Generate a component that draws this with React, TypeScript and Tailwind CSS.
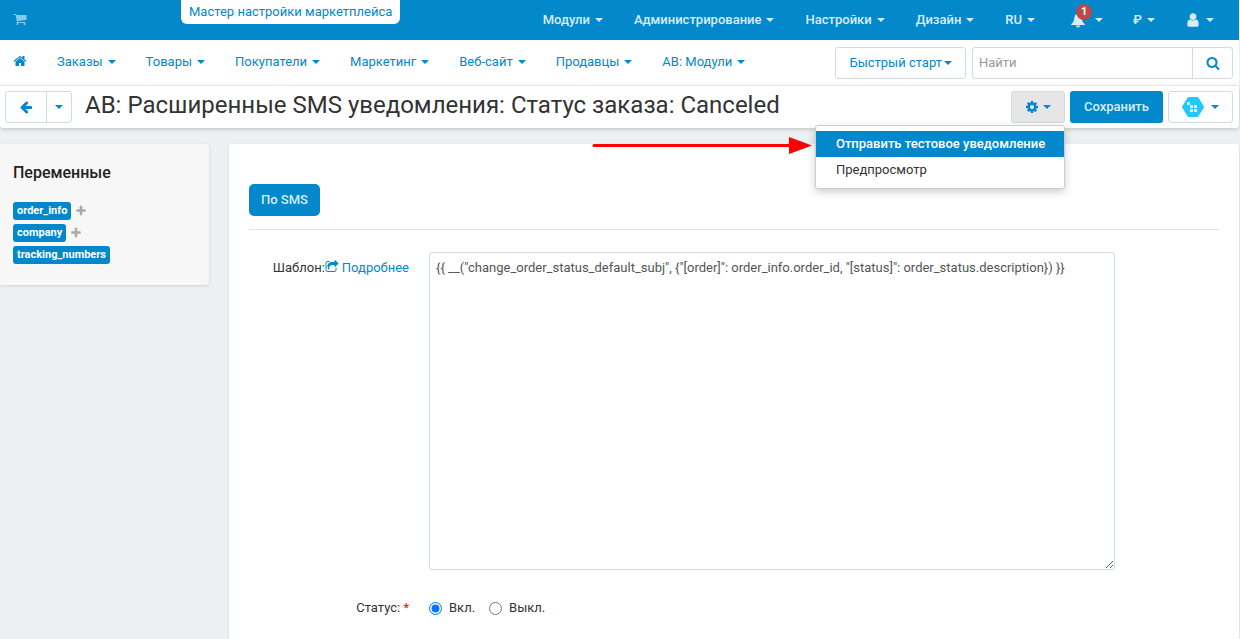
import { useState, type ReactNode } from "react"
import clsx from "clsx"

const icons = {
  cart: "M704 1536q0 52-38 90t-90 38-90-38-38-90 38-90 90-38 90 38 38 90zm896 0q0 52-38 90t-90 38-90-38-38-90 38-90 90-38 90 38 38 90zm128-1088v512q0 24-16.5 42.5t-40.5 21.5l-1044 122q13 60 13 70 0 16-24 64h920q26 0 45 19t19 45-19 45-45 19h-1024q-26 0-45-19t-19-45q0-11 8-31.5t16-36 21.5-40 15.5-29.5l-177-823h-204q-26 0-45-19t-19-45 19-45 45-19h256q16 0 28.5 6.5t19.5 15.5 13 24.5 8 26 5.5 29.5 4.5 26h1201q26 0 45 19t19 45z",
  home: "M1472 992v480q0 26-19 45t-45 19h-384v-384h-256v384h-384q-26 0-45-19t-19-45v-480q0-1 .5-3t.5-3l575-474 575 474q1 2 1 6zm223-69l-62 74q-8 9-21 11h-3q-13 0-21-7l-692-577-692 577q-12 8-24 7-13-2-21-11l-62-74q-8-10-7-23.5t11-21.5l719-599q32-26 76-26t76 26l244 204v-195q0-14 9-23t23-9h192q14 0 23 9t9 23v408l219 182q10 8 11 21.5t-7 23.5z",
  arrowLeft: "M1664 896v128q0 53-32.5 90.5t-84.5 37.5h-704l293 294q38 36 38 90t-38 90l-75 76q-37 37-90 37-52 0-91-37l-651-652q-37-37-37-90 0-52 37-91l651-650q38-38 91-38 52 0 90 38l75 74q38 38 38 91t-38 91l-293 293h704q52 0 84.5 37.5t32.5 90.5z",
  search: "M1216 832q0-185-131.5-316.5t-316.5-131.5-316.5 131.5-131.5 316.5 131.5 316.5 316.5 131.5 316.5-131.5 131.5-316.5zm512 832q0 52-38 90t-90 38q-54 0-90-38l-343-342q-179 124-399 124-143 0-273.5-55.5t-225-150-150-225-55.5-273.5 55.5-273.5 150-225 225-150 273.5-55.5 273.5 55.5 225 150 150 225 55.5 273.5q0 220-124 399l343 343q37 37 37 90z",
  cog: "M1152 896q0-106-75-181t-181-75-181 75-75 181 75 181 181 75 181-75 75-181zm512-109v222q0 12-8 23t-20 13l-185 28q-19 54-39 91 35 50 107 138 10 12 10 25t-9 23q-27 37-99 108t-94 71q-12 0-26-9l-138-108q-44 23-91 38-16 136-29 186-7 28-36 28h-222q-14 0-24.5-8.5t-11.5-21.5l-28-184q-49-16-90-37l-141 107q-10 9-25 9-14 0-25-11-126-114-165-168-7-10-7-23 0-12 8-23 15-21 51-66.5t54-70.5q-27-50-41-99l-183-27q-13-2-21-12.5t-8-23.5v-222q0-12 8-23t19-13l186-28q14-46 39-92-40-57-107-138-10-12-10-24 0-10 9-23 26-36 98.5-107.5t94.5-71.5q13 0 26 10l138 107q44-23 91-38 16-136 29-186 7-28 36-28h222q14 0 24.5 8.5t11.5 21.5l28 184q49 16 90 37l142-107q9-9 24-9 13 0 25 10 129 119 165 170 7 8 7 22 0 12-8 23-15 21-51 66.5t-54 70.5q26 50 41 98l183 28q13 2 21 12.5t8 23.5z",
  plus: "M1600 736v192q0 40-28 68t-68 28h-416v416q0 40-28 68t-68 28h-192q-40 0-68-28t-28-68v-416h-416q-40 0-68-28t-28-68v-192q0-40 28-68t68-28h416v-416q0-40 28-68t68-28h192q40 0 68 28t28 68v416h416q40 0 68 28t28 68z",
  share: "M1472 989v259q0 119-84.5 203.5t-203.5 84.5h-832q-119 0-203.5-84.5t-84.5-203.5v-832q0-119 84.5-203.5t203.5-84.5h255q13 0 22.5 9.5t9.5 22.5q0 27-26 32-77 26-133 60-10 4-16 4h-112q-66 0-113 47t-47 113v832q0 66 47 113t113 47h832q66 0 113-47t47-113v-214q0-19 18-29 28-13 54-37 16-16 35-8 21 9 21 29zm237-496l-384 384q-18 19-45 19-12 0-25-5-39-17-39-59v-192h-160q-323 0-438 131-119 137-74 473 3 23-20 34-8 2-12 2-16 0-26-13-10-14-21-31t-39.5-68.5-49.5-99.5-38.5-114-17.5-122q0-49 3.5-91t14-90 28-88 47-81.5 68.5-74 94.5-61.5 124.5-48.5 159.5-30.5 196.5-11h160v-192q0-42 39-59 13-5 25-5 26 0 45 19l384 384q19 19 19 45t-19 45z",
  user: "M1536 1399q0 109-62.5 187t-150.5 78h-854q-88 0-150.5-78t-62.5-187q0-85 8.5-160.5t31.5-152 58.5-131 94-89 134.5-34.5q131 128 313 128t313-128q76 0 134.5 34.5t94 89 58.5 131 31.5 152 8.5 160.5zm-256-887q0 159-112.5 271.5t-271.5 112.5-271.5-112.5-112.5-271.5 112.5-271.5 271.5-112.5 271.5 112.5 112.5 271.5z",
}

function Icon({ name, className = "size-3.5" }: { name: keyof typeof icons; className?: string }) {
  return (
    <svg viewBox="0 0 1792 1792" fill="currentColor" className={clsx("shrink-0", className)} aria-hidden="true">
      <path d={icons[name]} />
    </svg>
  )
}

function Caret() {
  return <span className="border-x-4 border-t-4 border-x-transparent" />
}

function MenuButton({ children, label }: { children: ReactNode; label?: string }) {
  return (
    <button type="button" aria-label={label} className="flex items-center gap-[5px] whitespace-nowrap">
      {children}
      <Caret />
    </button>
  )
}

const adminMenu = ["Модули", "Администрирование", "Настройки", "Дизайн", "RU"]

const storeMenu = ["Заказы", "Товары", "Покупатели", "Маркетинг", "Веб-сайт", "Продавцы", "АВ: Модули"]

const variables = [
  { name: "order_info", expandable: true },
  { name: "company", expandable: true },
  { name: "tracking_numbers", expandable: false },
]

function TopBar() {
  return (
    <header className="flex h-10 items-start bg-[#0388cc] pr-[25px] pl-[13px] font-medium text-[#d9edf7]">
      <a href="#store" aria-label="Магазин" className="flex h-[38px] items-center text-[#8cc9e9]">
        <Icon name="cart" />
      </a>
      <a
        href="#wizard"
        className="ml-[154px] flex h-6 items-center rounded-b-md bg-white px-2 font-normal whitespace-nowrap text-[#0388cc]"
      >
        Мастер настройки маркетплейса
      </a>
      <div className="ml-auto flex h-10 items-center gap-[35px]">
        <nav className="flex items-center gap-[31px]">
          {adminMenu.map((item) => (
            <MenuButton key={item}>{item}</MenuButton>
          ))}
        </nav>
        <div className="flex items-center gap-[30px]">
          <MenuButton label="Уведомления">
            <span className="relative mr-1 flex">
              <svg viewBox="0 0 16 16" fill="currentColor" className="size-4" aria-hidden="true">
                <path d="M8 1.500c-2 .3-3.400 1.800-3.600 4C4.100 9 3.200 10.600 1.200 12v1h13.600v-1c-2-1.400-2.900-3-3.200-6.500-.2-2.200-1.600-3.700-3.600-4zM6 13.500a2 2 0 0 0 4 0z" />
              </svg>
              <span className="absolute -top-2 left-1.5 flex size-4 items-center justify-center rounded-full bg-[#b94a48] text-[11px] leading-4 font-bold text-white">
                1
              </span>
            </span>
          </MenuButton>
          <MenuButton>₽</MenuButton>
          <MenuButton label="Профиль">
            <Icon name="user" className="size-4" />
          </MenuButton>
        </div>
      </div>
    </header>
  )
}

function StoreNav() {
  return (
    <div className="flex h-[46px] items-center border-b border-[#f2f2f2] bg-white pr-1.5 pl-[13px] text-[#0388cc]">
      <a href="#home" aria-label="Главная" className="pb-[3px]">
        <Icon name="home" />
      </a>
      <nav className="ml-[30px] flex items-center gap-[30px] pb-0.5">
        {storeMenu.map((item) => (
          <MenuButton key={item}>{item}</MenuButton>
        ))}
      </nav>
      <button
        type="button"
        className="ml-auto flex h-8 items-center gap-0.5 rounded-[3px] border border-[#d1dbe3] px-[13px] whitespace-nowrap"
      >
        Быстрый старт
        <Caret />
      </button>
      <form className="ml-1.5 flex h-8 rounded-[3px] border border-[#d1dbe3]" onSubmit={(e) => e.preventDefault()}>
        <input
          type="search"
          aria-label="Найти"
          placeholder="Найти"
          className="w-[219px] px-1.5 text-[#555] outline-none placeholder:text-[#999]"
        />
        <button
          type="submit"
          aria-label="Искать"
          className="flex w-10 items-center justify-center border-l border-[#d1dbe3]"
        >
          <Icon name="search" />
        </button>
      </form>
    </div>
  )
}

function ActionsMenu() {
  const [open, setOpen] = useState(true)

  return (
    <div className="relative">
      <button
        type="button"
        aria-label="Действия"
        aria-expanded={open}
        onClick={() => setOpen(!open)}
        className="flex h-8 w-[54px] items-center justify-center gap-1 rounded-[3px] border border-[#d1dbe3] bg-[#e6e6e6] text-[#0388cc]"
      >
        <Icon name="cog" />
        <Caret />
      </button>
      {open && (
        <div className="absolute top-full right-0 z-10 mt-0.5 w-[250px] rounded-[3px] border border-[#ccc] bg-white py-[5px] shadow-[0_3px_8px_rgba(0,0,0,0.2)]">
          <a href="#test" className="block bg-[#0388cc] px-5 py-[3px] font-medium whitespace-nowrap text-white">
            Отправить тестовое уведомление
          </a>
          <a href="#preview" className="block px-5 py-[3px] text-[#333]">
            Предпросмотр
          </a>
          <svg viewBox="0 0 220 18" className="absolute top-2.5 right-full mr-1 h-[18px] w-[220px]" aria-hidden="true">
            <path d="M2 9.500h198" stroke="#f00" strokeWidth="3" strokeLinecap="round" />
            <path d="M197 1L220 9.500l-23 8.500z" fill="#f00" />
          </svg>
        </div>
      )}
    </div>
  )
}

function TitleBar() {
  return (
    <div className="relative flex h-[42px] items-center rounded-b-[3px] bg-white pr-1.5 pl-[5px] shadow-[0_1px_4px_rgba(0,0,0,0.2)]">
      <div className="flex h-8 rounded-[3px] border border-[#d1dbe3] text-[#0388cc]">
        <button type="button" aria-label="Назад" className="flex w-10 items-center justify-center">
          <Icon name="arrowLeft" />
        </button>
        <button
          type="button"
          aria-label="История"
          className="flex w-[25px] items-center justify-center border-l border-[#d1dbe3]"
        >
          <Caret />
        </button>
      </div>
      <h1 className="ml-[13px] pb-1 text-2xl whitespace-nowrap text-[#333]">
        АВ: Расширенные SMS уведомления: Статус заказа: Canceled
      </h1>
      <div className="ml-auto flex gap-[5px]">
        <ActionsMenu />
        <button type="button" className="h-8 rounded-[3px] bg-[#0388cc] px-3.5 font-medium text-[#d9edf7]">
          Сохранить
        </button>
        <button
          type="button"
          aria-label="Модуль"
          className="flex h-8 w-[65px] items-center justify-center gap-[7px] rounded-[3px] border border-[#d1dbe3] text-[#0388cc]"
        >
          <svg viewBox="0 0 22 20" className="h-5 w-[22px]" aria-hidden="true">
            <path
              d="M6.500 1h9L21 10l-5.500 9h-9L1 10z"
              fill="#23c8fb"
              stroke="#23c8fb"
              strokeWidth="2"
              strokeLinejoin="round"
            />
            <g fill="#fff">
              <circle cx="6.500" cy="6.500" r="1.500" />
              <rect x="8" y="8" width="3" height="3" rx="1" />
              <rect x="12" y="8" width="3" height="3" rx="1" />
              <rect x="8" y="12" width="3" height="3" rx="1" />
              <rect x="12" y="12" width="3" height="3" rx="1" />
            </g>
          </svg>
          <Caret />
        </button>
      </div>
    </div>
  )
}

function Sidebar() {
  return (
    <aside className="w-[209px] shrink-0 self-start rounded-r-[3px] bg-[#f7f7f7] px-[13px] pt-[19px] pb-[21px] shadow-[0_1px_3px_rgba(0,0,0,0.12)]">
      <h2 className="text-base leading-5 font-medium text-[#222]">Переменные</h2>
      <ul className="mt-[19px] flex flex-col gap-1">
        {variables.map((v) => (
          <li key={v.name} className="flex items-center gap-1">
            <button
              type="button"
              className="h-[18px] rounded-[3px] bg-[#0388cc] px-1 text-[11px] leading-4 font-bold text-white"
            >
              {v.name}
            </button>
            {v.expandable && (
              <button type="button" aria-label={`Развернуть ${v.name}`} className="text-[#aaa]">
                <Icon name="plus" className="size-3" />
              </button>
            )}
          </li>
        ))}
      </ul>
    </aside>
  )
}

function TemplateForm() {
  const [template, setTemplate] = useState(
    '{{ __("change_order_status_default_subj", {"[order]": order_info.order_id, "[status]": order_status.description}) }}'
  )
  const [status, setStatus] = useState("on")

  return (
    <main className="min-w-0 flex-1 rounded-t-[3px] bg-white px-5 pt-10 shadow-[0_1px_3px_rgba(0,0,0,0.12)]">
      <button type="button" className="h-8 rounded-[5px] bg-[#0388cc] px-3 font-medium text-[#d9edf7]">
        По SMS
      </button>
      <hr className="mt-[13px] border-[#e0e4e8]" />
      <div className="mt-[22px] flex gap-5">
        <div className="flex w-40 justify-end pt-1.5">
          <label htmlFor="template">Шаблон:</label>
          <a href="#more" className="flex items-start gap-[3px] text-[#0388cc]">
            <Icon name="share" className="mt-0.5 size-3.5" />
            Подробнее
          </a>
        </div>
        <textarea
          id="template"
          value={template}
          onChange={(e) => setTemplate(e.target.value)}
          spellCheck={false}
          className="mr-26 h-[318px] min-w-0 flex-1 rounded-[3px] border border-[#d1dbe3] px-1.5 py-[5px] text-[#555] outline-none"
        />
      </div>
      <div role="radiogroup" aria-labelledby="status-label" className="mt-7 flex gap-5">
        <div id="status-label" className="w-40 text-right">
          Статус: <span className="text-[#f00]">*</span>
        </div>
        <div className="flex gap-3.5">
          <label className="flex items-center gap-[7px]">
            <input type="radio" name="status" checked={status === "on"} onChange={() => setStatus("on")} />
            Вкл.
          </label>
          <label className="flex items-center gap-[7px]">
            <input type="radio" name="status" checked={status === "off"} onChange={() => setStatus("off")} />
            Выкл.
          </label>
        </div>
      </div>
    </main>
  )
}

export default function App() {
  return (
    <div className="flex min-h-screen flex-col bg-[#ecf0f3] pr-px font-['Roboto','Liberation_Sans',sans-serif] text-[13px] leading-5 text-[#333]">
      <TopBar />
      <StoreNav />
      <TitleBar />
      <div className="mt-4 flex flex-1 gap-5">
        <Sidebar />
        <TemplateForm />
      </div>
    </div>
  )
}
